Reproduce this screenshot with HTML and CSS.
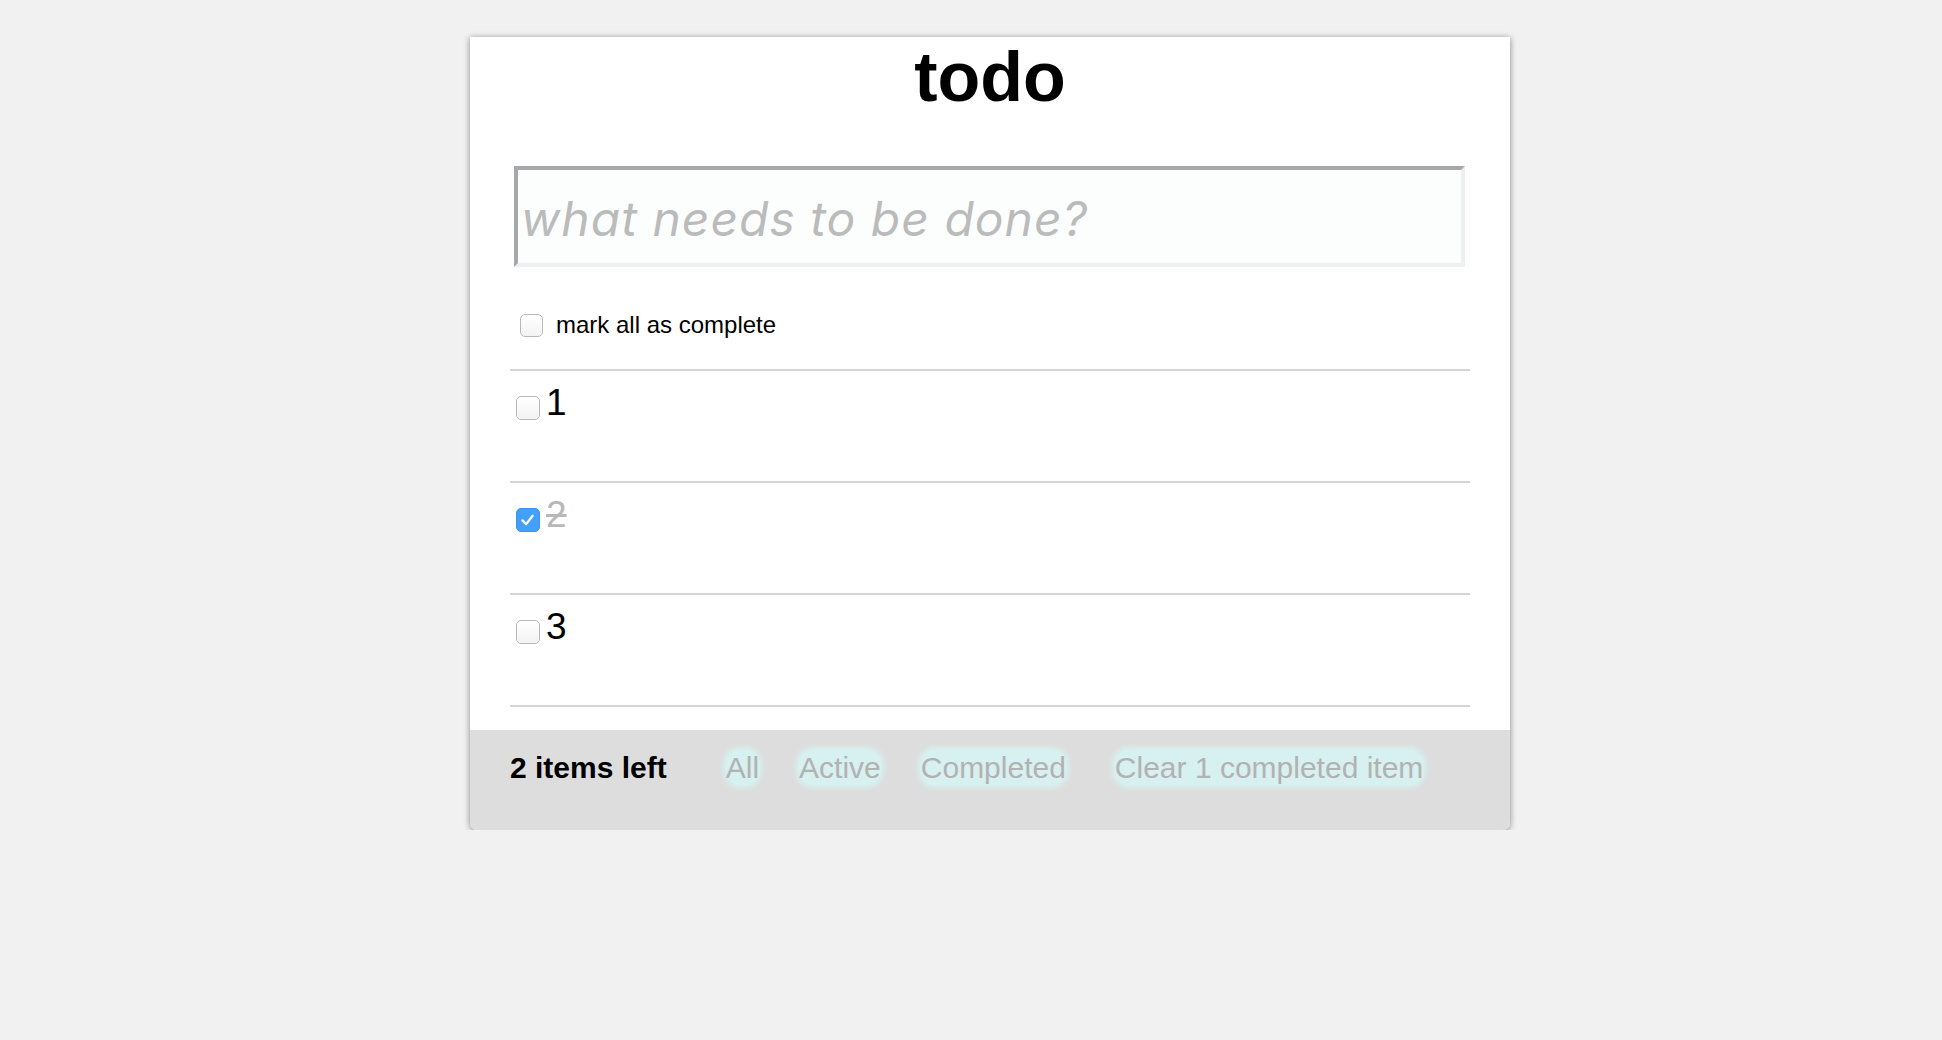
FILE: index.html
```html
<!DOCTYPE html>
<html lang="en">
<head>
<meta charset="utf-8">
<title>todo</title>
<link rel="stylesheet" href="styles.css">
</head>
<body>
<div class="page">
  <div class="app">
    <div class="main">
      <h1 class="title">todo</h1>
      <input class="new-todo" type="text" placeholder="what needs to be done?">
      <label class="mark-all"><span class="cb cb-small"></span><span class="mark-all-text">mark all as complete</span></label>
      <ul class="list">
        <li class="item"><span class="cb"></span><span class="item-text">1</span></li>
        <li class="item done"><span class="cb checked"><svg class="tick" viewBox="0 0 24 24" width="22" height="22"><polyline points="6,12.5 10,16.5 17,7.5" fill="none" stroke="#fff" stroke-width="2.6" stroke-linecap="round" stroke-linejoin="round"/></svg></span><span class="item-text">2</span></li>
        <li class="item"><span class="cb"></span><span class="item-text">3</span></li>
      </ul>
    </div>
    <div class="footer">
      <span class="count">2 items left</span>
      <a class="filter">All</a>
      <a class="filter">Active</a>
      <a class="filter">Completed</a>
      <a class="filter clear">Clear 1 completed item</a>
    </div>
  </div>
</div>
</body>
</html>
```

FILE: styles.css
```css
html, body {
  margin: 0;
  padding: 0;
}

body {
  background: #f1f1f1;
  font-family: "Liberation Sans", Arial, Helvetica, sans-serif;
  color: #000;
}

.page {
  display: flex;
  justify-content: center;
  padding: 37px 0 0 38px;
}

.app {
  width: 1040px;
  background: #fff;
  border-radius: 0 0 7px 7px;
  box-shadow: 0 1px 6px rgba(0, 0, 0, 0.45);
}

.main {
  padding: 0 40px;
}

.title {
  margin: 0;
  font-size: 70px;
  line-height: 80px;
  font-weight: bold;
  text-align: center;
}

.new-todo {
  display: block;
  box-sizing: border-box;
  width: 951px;
  height: 101px;
  margin: 49px 0 0 4px;
  padding: 4px 0 0 3px;
  border-style: solid;
  border-width: 4px;
  border-color: #a6a9a9 #edf0f0 #edf0f0 #a6a9a9;
  background: #fcfefe;
  font-family: Inter, "Noto Sans", sans-serif;
  font-style: italic;
  font-size: 48px;
  letter-spacing: 1px;
  outline: none;
}

.new-todo::placeholder {
  color: #bbbbbb;
}

.mark-all {
  display: flex;
  align-items: center;
  margin: 44px 0 0 10px;
  font-size: 24px;
  line-height: 28px;
}

.cb {
  display: inline-flex;
  align-items: center;
  justify-content: center;
  flex: none;
  box-sizing: border-box;
  width: 24px;
  height: 24px;
  border: 1px solid #b8b8b8;
  border-radius: 5px;
  background: linear-gradient(#ffffff, #f3f3f3);
}

.cb-small {
  width: 23px;
  height: 23px;
  margin-right: 13px;
}

.cb.checked {
  border-color: #3a92ee;
  background: #42a0fa;
}

.list {
  list-style: none;
  margin: 30px 0 23px;
  padding: 0;
  border-top: 2px solid #d5d5d5;
}

.item {
  display: flex;
  align-items: flex-start;
  height: 99px;
  padding-top: 11px;
  border-bottom: 2px solid #d5d5d5;
}

.item .cb {
  margin: 14px 6px 0 6px;
}

.item-text {
  font-size: 37px;
  line-height: 42px;
}

.done .item-text {
  color: #b8b8b8;
  text-decoration: line-through;
}

.footer {
  display: flex;
  align-items: flex-start;
  box-sizing: border-box;
  height: 100px;
  padding: 20px 40px 0;
  background: #dddddd;
  border-radius: 0 0 7px 7px;
  font-size: 30px;
  line-height: 35px;
}

.count {
  font-weight: bold;
  margin-right: 59px;
}

.filter {
  color: #b2b2b2;
  background: #d7f0f0;
  border-radius: 14px;
  box-shadow: 0 0 5px 3px #d7f0f0;
}

.filter + .filter {
  margin-left: 40px;
}

.filter.clear {
  margin-left: 49px;
}
```
